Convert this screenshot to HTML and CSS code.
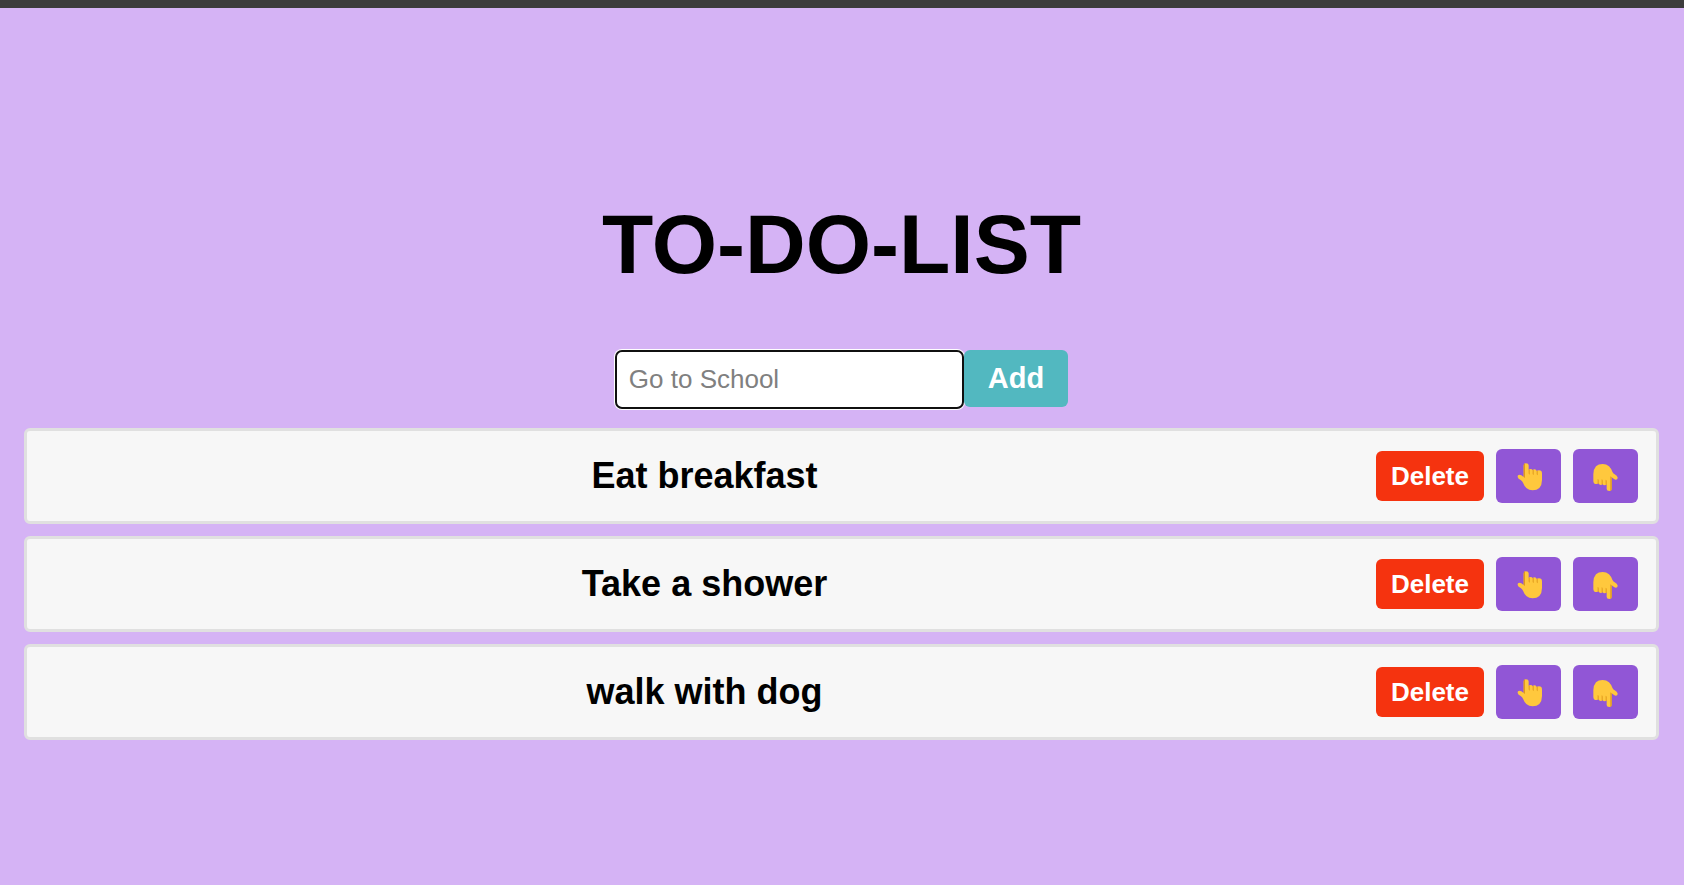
FILE: index.html
```html
<!DOCTYPE html>
<html lang="en">
<head>
<meta charset="utf-8">
<meta name="viewport" content="width=device-width, initial-scale=1">
<title>To-Do-List</title>
<link rel="stylesheet" href="styles.css">
</head>
<body>
<svg class="sprite" aria-hidden="true">
  <symbol id="hand" viewBox="0 0 73 81" overflow="visible">
    <path fill="#ffc83d" d="M18 6Q18 0 25 0Q33 0 33 6V20Q35 17 39 17Q44 17 45 21Q47 18 51 18Q56 18 57 23Q59 21 64 21Q73 21 73 31V50Q73 65 65 74Q58 81 45 81Q34 81 26 74Q20 68 16 58Q14 53 9 50L3 46Q-2 41 1 36Q5 32 11 36L18 41Z"/>
    <path fill="#e09a1c" d="M18 41V6Q18 1 22 0V44ZM33 19H36V34Q33 33 33 30ZM45 20H48V35Q45 34 45 31ZM57 22H60V36Q57 35 57 32Z"/>
  </symbol>
</svg>
<div class="topbar"></div>
<main class="todo">
  <h1 class="title">TO-DO-LIST</h1>
  <form class="entry">
    <input class="entry-input" type="text" aria-label="New task" placeholder="Go to School">
    <button class="entry-add" type="button">Add</button>
  </form>
  <ol class="tasks">
    <li class="task">
      <span class="task-text">Eat breakfast</span>
      <button class="delete" type="button">Delete</button>
      <button class="move" type="button" aria-label="Move up"><svg class="icon" viewBox="-11 -7 87 90"><use href="#hand" width="73" height="81"/></svg></button>
      <button class="move" type="button" aria-label="Move down"><svg class="icon" viewBox="-7 -9 87 90"><use href="#hand" width="73" height="81" transform="rotate(180 36.5 40.5)"/></svg></button>
    </li>
    <li class="task">
      <span class="task-text">Take a shower</span>
      <button class="delete" type="button">Delete</button>
      <button class="move" type="button" aria-label="Move up"><svg class="icon" viewBox="-11 -7 87 90"><use href="#hand" width="73" height="81"/></svg></button>
      <button class="move" type="button" aria-label="Move down"><svg class="icon" viewBox="-7 -9 87 90"><use href="#hand" width="73" height="81" transform="rotate(180 36.5 40.5)"/></svg></button>
    </li>
    <li class="task">
      <span class="task-text">walk with dog</span>
      <button class="delete" type="button">Delete</button>
      <button class="move" type="button" aria-label="Move up"><svg class="icon" viewBox="-11 -7 87 90"><use href="#hand" width="73" height="81"/></svg></button>
      <button class="move" type="button" aria-label="Move down"><svg class="icon" viewBox="-7 -9 87 90"><use href="#hand" width="73" height="81" transform="rotate(180 36.5 40.5)"/></svg></button>
    </li>
  </ol>
</main>
</body>
</html>
```
FILE: styles.css
```css
* {
  box-sizing: border-box;
}

body {
  margin: 0;
  min-height: 100vh;
  display: flex;
  flex-direction: column;
  background: #d5b3f5;
  color: #000;
  font-family: "Liberation Sans", Arial, sans-serif;
}

.sprite {
  position: absolute;
  width: 0;
  height: 0;
}

.topbar {
  height: 8px;
  background: #3c3c3c;
}

.todo {
  flex: 1;
  display: flex;
  flex-direction: column;
  justify-content: center;
  padding: 0 25px 0 24px;
}

.title {
  margin: 44px 0 59px;
  font-size: 84px;
  line-height: 94px;
  text-align: center;
}

.entry {
  display: flex;
  justify-content: center;
  align-items: flex-start;
  margin-bottom: 19px;
}

.entry-input {
  width: 349px;
  padding: 12px;
  border: 2px solid #101010;
  border-radius: 7px;
  outline: none;
  box-shadow: 0 0 0 1px #fff;
  background: #fff;
  font: 26px/31px "Liberation Sans", Arial, sans-serif;
}

.entry-input::placeholder {
  color: #808080;
}

button {
  border: 0;
  border-radius: 6px;
  color: #fff;
  font-family: inherit;
  font-weight: bold;
  cursor: pointer;
}

.entry-add {
  padding: 12px 24px;
  background: #52b8c0;
  font-size: 29px;
  line-height: 33px;
}

.tasks {
  display: flex;
  flex-direction: column;
  gap: 12px;
  margin: 0;
  padding: 0;
  list-style: none;
}

.task {
  display: flex;
  align-items: center;
  gap: 12px;
  padding: 18px;
  border: 3px solid #e0e0e0;
  border-radius: 6px;
  background: #f7f7f7;
}

.task-text {
  flex: 1;
  font-size: 36px;
  line-height: 42px;
  font-weight: bold;
  text-align: center;
}

.delete {
  padding: 10px 15px;
  background: #f5330f;
  font-size: 26px;
  line-height: 30px;
}

.move {
  padding: 12px 18px;
  background: #9156d6;
}

.icon {
  display: block;
  width: 29px;
  height: 30px;
}
```
